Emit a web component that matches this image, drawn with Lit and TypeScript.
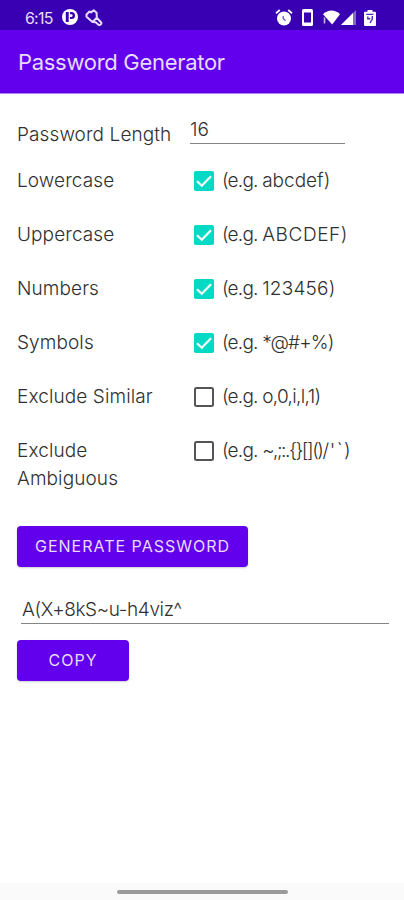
import { LitElement, html, css, svg } from "lit";
import { customElement } from "lit/decorators.js";

@customElement("status-bar")
class StatusBar extends LitElement {
  static styles = css`
    :host { display: flex; align-items: center; height: 30px; background: #3900b3; color: #e6dcfa; padding: 5px 28px 0 25px; box-sizing: border-box; }
    .time { font: 400 16px/20px Inter, sans-serif; letter-spacing: -0.8px; width: 37px; }
    svg { display: block; flex: none; }
    .left { display: flex; gap: 7px; }
    .right { display: flex; margin-left: auto; align-items: center; }
    .phone { margin-left: 9px; }
    .wifi { margin-left: 10px; }
    .signal { margin-left: 1px; }
    .battery { margin-left: 8px; }
  `;
  render() {
    return html`
      <span class="time">6:15</span>
      <div class="left">
        <svg width="16" height="16" viewBox="0 0 16 16"><circle cx="8" cy="8" r="8" fill="#fff"/><path d="M3.800 3h2.900v10H3.800zM8 3h1.500a3.500 3.500 0 0 1 0 7.100H8V7.900h1.300a1.300 1.300 0 0 0 0-2.700H8z" fill="#3900b3"/></svg>
        <svg width="18" height="18" viewBox="0 0 18 18"><g fill="none" stroke="#e6dcfa" stroke-width="2" stroke-linejoin="round" stroke-linecap="round"><path d="M4.500 2.500L1.500 5.500v2.300L7.500 13l4.300-4.200L11.600 3.800 8.700 1.200 6 3.400zM7.500 13l3.200.3 3 2.600c1.200.8 3.200-.8 2.500-2.400l-4.400-4.700"/></g></svg>
      </div>
      <div class="right">
        <svg width="18" height="17" viewBox="0 0 18 17"><circle cx="9" cy="9.500" r="7" fill="#fff"/><path d="M1 4.200L4.800 1M17 4.200L13.200 1" stroke="#fff" stroke-width="1.800"/><path d="M8.200 7v2.500l2.300 2.200" stroke="#7350c8" stroke-width="1.300" fill="none"/></svg>
        <svg class="phone" width="11" height="17" viewBox="0 0 11 17"><rect width="11" height="17" rx="1.500" fill="#fff"/><rect x="2" y="3.500" width="7" height="10" fill="#3900b3"/></svg>
        <svg class="wifi" width="17" height="15" viewBox="0 0 17 15"><path d="M0 4.200C5-.8 12-.8 17 4.200L9.200 14.600z" fill="#fff"/><path d="M1.500 7.500v6" stroke="#c6b3ee" stroke-width="1.600"/></svg>
        <svg class="signal" width="15" height="15" viewBox="0 0 15 15"><path d="M15 0v15H0z" fill="#8468cc"/><path d="M12 3V15H0z" fill="#fff"/></svg>
        <svg class="battery" width="12" height="16" viewBox="0 0 12 16"><path d="M3.500 0h5v1.700H11a1 1 0 0 1 1 1V15a1 1 0 0 1-1 1H1a1 1 0 0 1-1-1V2.700a1 1 0 0 1 1-1h2.500z" fill="#fff"/><path d="M2.200 4.400h7.200M3.800 6.500v2.300h2.500M8.300 6v3L6 13" fill="none" stroke="#5027be" stroke-width="1.400"/></svg>
      </div>`;
  }
}

@customElement("check-box")
class CheckBox extends LitElement {
  static properties = { checked: { type: Boolean } };
  declare checked: boolean;
  static styles = css`
    :host { display: block; width: 20px; height: 20px; }
    svg { display: block; }
  `;
  render() {
    return html`<svg width="20" height="20" viewBox="0 0 20 20">${this.checked
      ? svg`<rect width="20" height="20" rx="1.800" fill="#03dac5"/><path d="M3 10.200L7.800 14.800L17 5.200" fill="none" stroke="#fff" stroke-width="2.200"/>`
      : svg`<rect x="1" y="1" width="18" height="18" rx="1.500" fill="#fff" stroke="#555" stroke-width="2"/>`}</svg>`;
  }
}

const OPTIONS = [
  { id: "lower", label: "Lowercase", example: "abcdef)", on: true },
  { id: "upper", label: "Uppercase", example: "ABCDEF)", on: true },
  { id: "numbers", label: "Numbers", example: "123456)", on: true },
  { id: "symbols", label: "Symbols", example: "*@#+%)", on: true },
  { id: "similar", label: "Exclude Similar", example: "o,0,i,l,1)", on: false },
  { id: "ambiguous", label: "Exclude Ambiguous", example: "~,;:.{}[]()/", tail: "'`)", on: false },
];

@customElement("app-root")
class AppRoot extends LitElement {
  static styles = css`
    :host { display: flex; flex-direction: column; height: 900px; background: #fff; font: 300 19px/27px Inter, sans-serif; color: #303030; white-space: pre; }
    header { height: 64px; box-sizing: border-box; padding: 2px 18px 0; background: #6200ee; border-bottom: 1px solid #a987ee; color: #e8dcfd; display: flex; align-items: center; font-size: 22px; font-weight: 400; letter-spacing: -0.3px; }
    main { flex: 1; padding: 0 15px 0 17px; display: flex; flex-direction: column; align-items: flex-start; }
    .name { letter-spacing: 0.1px; }
    .length { display: flex; height: 73px; }
    .length .name { width: 173px; padding-top: 27px; }
    .length .field { width: 155px; height: 27px; padding-top: 1px; margin-top: 21px; border-bottom: 1px solid #858585; }
    .row { display: flex; height: 54px; line-height: 28px; }
    .row.ambiguous { height: 108px; }
    .row .name { width: 176px; }
    .row.ambiguous .name { width: 140px; margin-right: 36px; white-space: normal; }
    check-box { margin: 4px 8.5px 0 0.5px; }
    .prefix { letter-spacing: -0.8px; }
    .upper .value { letter-spacing: 0.6px; }
    .numbers .value { letter-spacing: 0.2px; }
    .symbols .value { letter-spacing: -0.9px; }
    .similar .value { letter-spacing: -0.65px; }
    .ambiguous .value { letter-spacing: -1.45px; }
    .ambiguous .tail { letter-spacing: 1.5px; margin-left: 2px; }
    .button { height: 41px; border-radius: 4px; background: #6200ee; color: #e8dcfd; font-size: 16px; font-weight: 400; line-height: 41px; text-align: center; letter-spacing: 1px; box-shadow: 0 1px 2px #0003; }
    .generate { width: 231px; margin-top: -19px; }
    .result { align-self: stretch; margin: 29px 0 16px 4px; padding-left: 1px; letter-spacing: -0.38px; height: 27px; border-bottom: 1px solid #858585; }
    .copy { width: 112px; }
    footer { height: 17px; background: #fafafa; display: flex; justify-content: center; }
    .handle { width: 171px; height: 4px; margin-top: 7px; border-radius: 2px; background: #9b9b9b; }
  `;
  render() {
    return html`
      <status-bar></status-bar>
      <header><span class="title">Password Generator</span></header>
      <main>
        <div class="length"><span class="name">Password Length</span><div class="field">16</div></div>
        ${OPTIONS.map(o => html`<div class="row ${o.id}"><span class="name">${o.label}</span><check-box .checked=${o.on}></check-box><span class="example"><span class="prefix">(e.g. </span><span class="value">${o.example}</span><span class="tail">${o.tail ?? ""}</span></span></div>`)}
        <div class="button generate">GENERATE PASSWORD</div>
        <div class="result">A(X+8kS~u-h4viz^</div>
        <div class="button copy">COPY</div>
      </main>
      <footer><div class="handle"></div></footer>`;
  }
}
